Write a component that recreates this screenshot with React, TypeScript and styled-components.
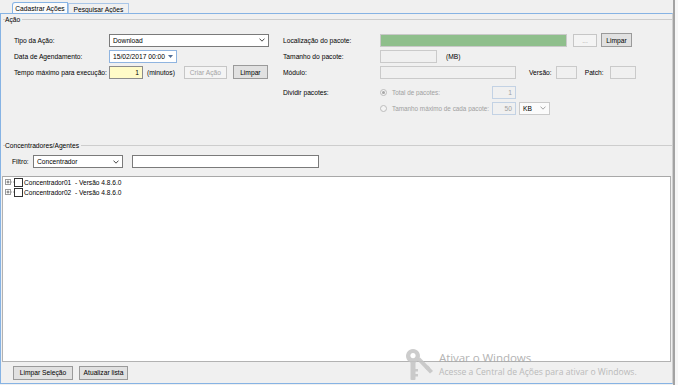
import React from "react";
import styled, { createGlobalStyle } from "styled-components";

const Global = createGlobalStyle`
  html, body { margin: 0; padding: 0; }
  body { width: 678px; height: 385px; overflow: hidden; background: #f0f0f0; }
  * { box-sizing: border-box; }
`;

const BLUE = "#86b3e4";
const FONT = `"Liberation Sans", Arial, sans-serif`;

const Window = styled.div`
  display: flex;
  width: 678px;
  height: 385px;
  background: #f0f0f0;
  position: relative;
  overflow: hidden;
  font-family: ${FONT};
  font-size: 6.7px;
  color: #000;
`;

const Main = styled.div`
  width: 673px;
  display: flex;
  flex-direction: column;
  padding-bottom: 1px;
`;

const FrameLine = styled.div`
  width: 2px;
  background: #a3a3a3;
`;

const FrameRest = styled.div`
  flex: 1;
  background: #f7f7f7;
`;

const TabStrip = styled.div`
  height: 13px;
  display: flex;
  align-items: flex-end;
  padding-left: 12px;
`;

const Tab = styled.div<{ $active?: boolean; $w: number }>`
  width: ${(p) => p.$w}px;
  height: ${(p) => (p.$active ? 11 : 10)}px;
  display: flex;
  align-items: center;
  justify-content: center;
  border: 1px solid ${(p) => (p.$active ? BLUE : "#a9c6e8")};
  border-bottom: none;
  border-radius: ${(p) => (p.$active ? "3px 1px 0 0" : "0 1px 0 0")};
  background: ${(p) => (p.$active ? "#fbfbfb" : "#f0f0f0")};
  white-space: nowrap;
  padding-top: 1px;
`;

const Panel = styled.div`
  flex: 1;
  display: flex;
  flex-direction: column;
  border: 1px solid ${BLUE};
  border-right-color: #cfcfcf;
`;

const GroupAcao = styled.div`
  height: 126px;
  display: flex;
  flex-direction: column;
`;

const GroupConc = styled.div`
  flex: 1;
  display: flex;
  flex-direction: column;
`;

const GroupHeader = styled.div`
  height: 11px;
  display: flex;
  align-items: center;
  padding-left: 2px;
`;

const HeaderDash = styled.div`
  width: 2px;
  height: 1px;
  background: #cdcdcd;
`;

const HeaderText = styled.span`
  padding: 0 2px 0 0;
  white-space: nowrap;
`;

const HeaderLine = styled.div`
  flex: 1;
  height: 1px;
  background: #cdcdcd;
`;

const AcaoBody = styled.div`
  display: flex;
  padding-top: 8px;
`;

const Column = styled.div<{ $w?: number; $pl: number }>`
  ${(p) => (p.$w ? `width: ${p.$w}px;` : "flex: 1;")}
  padding-left: ${(p) => p.$pl}px;
  display: flex;
  flex-direction: column;
  gap: 2px;
`;

const Row = styled.div<{ $mt?: number }>`
  height: 14px;
  display: flex;
  align-items: center;
  margin-top: ${(p) => p.$mt ?? 0}px;
`;

const Label = styled.span<{ $w?: number; $ml?: number; $gray?: boolean }>`
  ${(p) => (p.$w ? `width: ${p.$w}px; flex: none;` : "")}
  margin-left: ${(p) => p.$ml ?? 0}px;
  white-space: nowrap;
  color: ${(p) => (p.$gray ? "#9c9c9c" : "#000")};
`;

const Box = styled.div<{
  $w: number;
  $ml?: number;
  $bg?: string;
  $bc?: string;
  $right?: boolean;
  $gray?: boolean;
}>`
  width: ${(p) => p.$w}px;
  height: 13px;
  margin-left: ${(p) => p.$ml ?? 0}px;
  flex: none;
  background: ${(p) => p.$bg ?? "#fff"};
  border: 1px solid ${(p) => p.$bc ?? "#7a7a7a"};
  display: flex;
  align-items: center;
  justify-content: ${(p) => (p.$right ? "flex-end" : "space-between")};
  padding: 0 3px 0 3px;
  color: ${(p) => (p.$gray ? "#a0a0a0" : "#000")};
  white-space: nowrap;
`;

const Btn = styled.div<{ $w: number; $ml?: number; $off?: boolean }>`
  width: ${(p) => p.$w}px;
  height: ${(p) => (p.$off ? 13 : 14)}px;
  margin-left: ${(p) => p.$ml ?? 0}px;
  flex: none;
  display: flex;
  align-items: center;
  justify-content: center;
  background: ${(p) => (p.$off ? "#f4f4f4" : "#e1e1e1")};
  border: 1px solid ${(p) => (p.$off ? "#c6c6c6" : "#9a9a9a")};
  color: ${(p) => (p.$off ? "#a3a3a3" : "#000")};
  white-space: nowrap;
`;

const Radio = styled.div<{ $checked?: boolean }>`
  width: 7px;
  height: 7px;
  flex: none;
  border-radius: 50%;
  border: 1px solid #bcbcbc;
  background: #f4f4f4;
  display: flex;
  align-items: center;
  justify-content: center;
  &::after {
    content: "";
    width: 3px;
    height: 3px;
    border-radius: 50%;
    background: ${(p) => (p.$checked ? "#a6a6a6" : "transparent")};
  }
`;

const RadioText = styled.span<{ $w: number }>`
  width: ${(p) => p.$w}px;
  flex: none;
  padding-left: 5px;
  color: #a0a0a0;
  white-space: nowrap;
  font-size: 6.35px;
  overflow: hidden;
`;

const FilterRow = styled.div`
  height: 13px;
  margin-top: 4px;
  display: flex;
  align-items: center;
  padding-left: 11px;
`;

const List = styled.div`
  flex: 1;
  margin: 8px 1px 0 1px;
  background: #fff;
  border: 1px solid #b2b2b2;
  border-top-color: #a8a8a8;
  display: flex;
  flex-direction: column;
`;

const TreeRow = styled.div`
  height: 10px;
  display: flex;
  align-items: center;
  padding-left: 2px;
  font-size: 6.6px;
  white-space: pre;
`;

const Check = styled.div`
  width: 9px;
  height: 9px;
  border: 1px solid #333;
  background: #fff;
  margin-right: 1px;
  flex: none;
`;

const BottomBar = styled.div`
  height: 21px;
  display: flex;
  align-items: center;
  padding-left: 12px;
  gap: 6px;
`;

const Watermark = styled.div`
  position: absolute;
  left: 404px;
  top: 349px;
  display: flex;
  pointer-events: none;
  opacity: 0.85;
`;

const WmText = styled.div`
  display: flex;
  flex-direction: column;
  font-family: "Open Sans", "Noto Sans", sans-serif;
  color: #a7a7a7;
  padding-left: 5px;
  padding-top: 1px;
`;

const WmTitle = styled.div`
  font-size: 11.6px;
  line-height: 16px;
  letter-spacing: -0.1px;
`;

const WmSub = styled.div`
  font-size: 8.6px;
  line-height: 12px;
  color: #b0b0b0;
`;

const Chevron = ({ color = "#333" }: { color?: string }) => (
  <svg width="6" height="4" viewBox="0 0 6 4">
    <path d="M0.5 0.6 L3 3.2 L5.5 0.6" stroke={color} strokeWidth="0.9" fill="none" />
  </svg>
);

const DateArrow = () => (
  <svg width="5" height="3" viewBox="0 0 5 3">
    <path d="M0 0 L5 0 L2.5 3 Z" fill="#4f6d97" />
  </svg>
);

const PlusBox = () => (
  <svg width="9" height="9" viewBox="0 0 9 9" style={{ flex: "none" }}>
    <rect x="0.5" y="1.5" width="5" height="5" fill="#fff" stroke="#9a9a9a" strokeWidth="1" />
    <path d="M1.5 4 H4.5 M3 2.5 V5.5" stroke="#555" strokeWidth="0.8" />
    <path d="M6 4 H9" stroke="#a0a0a0" strokeWidth="1" strokeDasharray="1 1" />
  </svg>
);

const KeyIcon = () => (
  <svg width="30" height="32" viewBox="0 0 30 32">
    <g fill="#c4c4c4">
      <path d="M9 0 A7 7 0 1 1 8.99 0 Z M9 4 A2.6 2.6 0 1 0 9.01 4 Z" fillRule="evenodd" />
      <rect x="6.5" y="12" width="5" height="19" rx="1" />
      <rect x="11" y="20" width="3" height="2.5" />
      <rect x="11" y="25" width="3" height="2.5" />
      <path d="M13 11 L16 8.5 L29 22 L26 24.5 Z" />
      <path d="M21 19 L24 16.5 L26 18.5 L23 21 Z" />
    </g>
  </svg>
);

export default function App() {
  return (
    <Window>
      <Global />
      <Main>
        <TabStrip>
          <Tab $active $w={56}>Cadastrar Ações</Tab>
          <Tab $w={61}>Pesquisar Ações</Tab>
        </TabStrip>
        <Panel>
          <GroupAcao>
            <GroupHeader>
              <HeaderDash />
              <HeaderText>Ação</HeaderText>
              <HeaderLine />
            </GroupHeader>
            <AcaoBody>
              <Column $w={282} $pl={13}>
                <Row>
                  <Label $w={95}>Tipo da Ação:</Label>
                  <Box $w={160}>
                    <span>Download</span>
                    <Chevron />
                  </Box>
                </Row>
                <Row>
                  <Label $w={95}>Data de Agendamento:</Label>
                  <Box $w={68} $bc="#8fb4e0">
                    <span>15/02/2017 00:00</span>
                    <DateArrow />
                  </Box>
                </Row>
                <Row>
                  <Label $w={95}>Tempo máximo para execução:</Label>
                  <Box $w={34} $bg="#fffbc8" $bc="#8c8c8c" $right>
                    1
                  </Box>
                  <Label $ml={4}>(minutos)</Label>
                  <Btn $w={43} $ml={9} $off>
                    Criar Ação
                  </Btn>
                  <Btn $w={35} $ml={6}>
                    Limpar
                  </Btn>
                </Row>
              </Column>
              <Column $pl={0}>
                <Row>
                  <Label $w={97}>Localização do pacote:</Label>
                  <Box $w={187} $bg="#8fbf8c" $bc="#c9c9c9" />
                  <Btn $w={24} $ml={6} $off>
                    ...
                  </Btn>
                  <Btn $w={31} $ml={4}>
                    Limpar
                  </Btn>
                </Row>
                <Row>
                  <Label $w={97}>Tamanho do pacote:</Label>
                  <Box $w={57} $bg="#f0f0f0" $bc="#cacaca" />
                  <Label $ml={9}>(MB)</Label>
                </Row>
                <Row>
                  <Label $w={97}>Módulo:</Label>
                  <Box $w={136} $bg="#f0f0f0" $bc="#cacaca" />
                  <Label $ml={13}>Versão:</Label>
                  <Box $w={21} $ml={4} $bg="#f0f0f0" $bc="#cacaca" />
                  <Label $ml={8}>Patch:</Label>
                  <Box $w={26} $ml={6} $bg="#f0f0f0" $bc="#cacaca" />
                </Row>
                <Row $mt={4}>
                  <Label $w={97}>Dividir pacotes:</Label>
                  <Radio $checked />
                  <RadioText $w={105}>Total de pacotes:</RadioText>
                  <Box $w={24} $bg="#f0f0f0" $bc="#c3d2e4" $right $gray>
                    1
                  </Box>
                </Row>
                <Row>
                  <Label $w={97} />
                  <Radio />
                  <RadioText $w={105}>Tamanho máximo de cada pacote:</RadioText>
                  <Box $w={24} $bg="#f0f0f0" $bc="#c3d2e4" $right $gray>
                    50
                  </Box>
                  <Box $w={31} $ml={3} $bg="#fbfbfb" $bc="#cacaca">
                    <span>KB</span>
                    <Chevron color="#9a9a9a" />
                  </Box>
                </Row>
              </Column>
            </AcaoBody>
          </GroupAcao>
          <GroupConc>
            <GroupHeader>
              <HeaderDash />
              <HeaderText>Concentradores/Agentes</HeaderText>
              <HeaderLine />
            </GroupHeader>
            <FilterRow>
              <Label $w={21}>Filtro:</Label>
              <Box $w={90}>
                <span>Concentrador</span>
                <Chevron />
              </Box>
              <Box $w={187} $ml={9} />
            </FilterRow>
            <List>
              <TreeRow>
                <PlusBox />
                <Check />
                {"Concentrador01  - Versão 4.8.6.0"}
              </TreeRow>
              <TreeRow>
                <PlusBox />
                <Check />
                {"Concentrador02  - Versão 4.8.6.0"}
              </TreeRow>
            </List>
            <BottomBar>
              <Btn $w={60}>Limpar Seleção</Btn>
              <Btn $w={49}>Atualizar lista</Btn>
            </BottomBar>
          </GroupConc>
        </Panel>
      </Main>
      <FrameLine />
      <FrameRest />
      <Watermark>
        <KeyIcon />
        <WmText>
          <WmTitle>Ativar o Windows</WmTitle>
          <WmSub>Acesse a Central de Ações para ativar o Windows.</WmSub>
        </WmText>
      </Watermark>
    </Window>
  );
}
